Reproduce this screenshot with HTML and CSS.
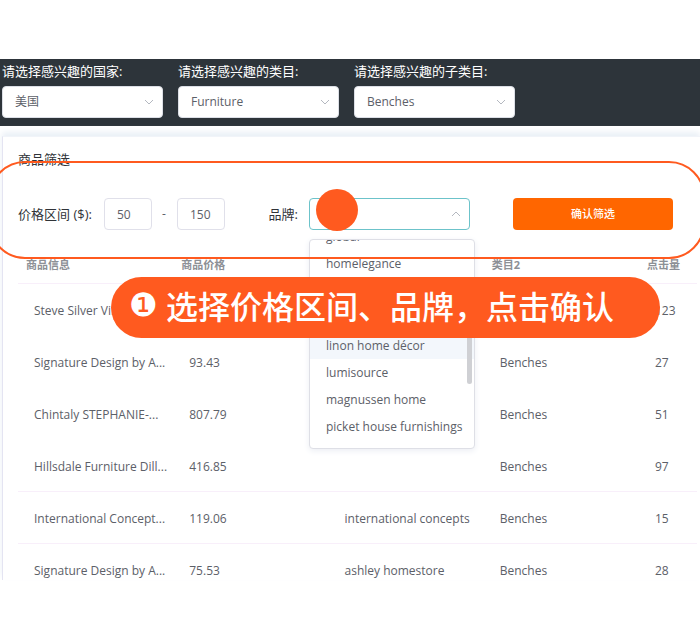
FILE: index.html
```
<!DOCTYPE html>
<html lang="zh-CN">
<head>
<meta charset="utf-8">
<title>商品筛选</title>
<link rel="stylesheet" href="styles.css">
</head>
<body>
<div class="page">
  <header class="topbar">
    <div class="field">
      <label for="country">请选择感兴趣的国家:</label>
      <div class="select">
        <select id="country"><option>美国</option></select>
        <svg class="chevron" viewBox="0 0 10 6"><path d="M1 1l4 4 4-4"/></svg>
      </div>
    </div>
    <div class="field">
      <label for="category">请选择感兴趣的类目:</label>
      <div class="select">
        <select id="category"><option>Furniture</option></select>
        <svg class="chevron" viewBox="0 0 10 6"><path d="M1 1l4 4 4-4"/></svg>
      </div>
    </div>
    <div class="field">
      <label for="subcategory">请选择感兴趣的子类目:</label>
      <div class="select">
        <select id="subcategory"><option>Benches</option></select>
        <svg class="chevron" viewBox="0 0 10 6"><path d="M1 1l4 4 4-4"/></svg>
      </div>
    </div>
  </header>

  <main class="card">
    <h1 class="title">商品筛选</h1>
    <form class="filters">
      <label class="name" for="min">价格区间 ($):</label>
      <input class="price" id="min" type="text" value="50">
      <span class="dash">-</span>
      <input class="price" id="max" type="text" value="150" aria-label="最高价格">
      <label class="name brand-name" for="brand">品牌:</label>
      <div class="select brand">
        <input id="brand" type="text" role="combobox" aria-expanded="true" aria-controls="brands">
        <svg class="chevron" viewBox="0 0 10 6"><path d="M1 5l4-4 4 4"/></svg>
        <span class="pointer"></span>
        <div class="menu">
          <ul class="options" id="brands" role="listbox">
            <li role="option">global</li>
            <li role="option">homelegance</li>
            <li class="active" role="option">linon home décor</li>
            <li role="option">lumisource</li>
            <li role="option">magnussen home</li>
            <li role="option">picket house furnishings</li>
          </ul>
          <span class="thumb"></span>
        </div>
      </div>
      <button class="confirm" type="button">确认筛选</button>
    </form>

    <table class="goods">
      <thead>
        <tr><th>商品信息</th><th>商品价格</th><th></th><th>类目2</th><th>点击量</th></tr>
      </thead>
      <tbody>
        <tr><td>Steve Silver Vi...</td><td></td><td></td><td></td><td>123</td></tr>
        <tr><td>Signature Design by A...</td><td>93.43</td><td></td><td>Benches</td><td>27</td></tr>
        <tr><td>Chintaly STEPHANIE-...</td><td>807.79</td><td></td><td>Benches</td><td>51</td></tr>
        <tr><td>Hillsdale Furniture Dill...</td><td>416.85</td><td></td><td>Benches</td><td>97</td></tr>
        <tr><td>International Concept...</td><td>119.06</td><td>international concepts</td><td>Benches</td><td>15</td></tr>
        <tr><td>Signature Design by A...</td><td>75.53</td><td>ashley homestore</td><td>Benches</td><td>28</td></tr>
      </tbody>
    </table>
    <div class="outline"></div>
    <p class="callout"><span class="step">❶</span>选择价格区间、品牌，点击确认</p>
  </main>
</div>
</body>
</html>
```
FILE: styles.css
```
* { box-sizing: border-box; }

body {
  margin: 0;
  background: #fff;
  color: #5c6068;
  font: 12px/18px "Open Sans", "Noto Sans CJK SC", sans-serif;
}

input, select, button { font: inherit; color: inherit; }

.page { padding: 59px 0 62px; overflow: hidden; }

.topbar {
  display: flex;
  gap: 15px;
  padding: 3px 2px 8px;
  background: #2d343a;
}

.field { flex: 0 1 161px; }

.field label {
  display: block;
  margin-bottom: 6px;
  color: #fff;
  font-size: 13px;
  white-space: nowrap;
}

.select { position: relative; display: flex; align-items: center; }

.select select, .select input {
  width: 100%;
  height: 32px;
  padding: 0 28px 0 12px;
  border: 1px solid #dcdfe6;
  border-radius: 4px;
  background: #fff;
  appearance: none;
  outline: none;
}

.select .chevron {
  position: absolute;
  right: 9px;
  width: 10px;
  height: 6px;
  fill: none;
  stroke: #b4b8c0;
}

.card {
  position: relative;
  margin: 10px 0 0 2px;
  padding: 12px 3px 0 15px;
  border-left: 1px solid #e4e4f2;
  border-top: 1px solid #f1f4f9;
  box-shadow: 0 -4px 6px #eaf0f6;
}

.title {
  margin: 0;
  color: #303338;
  font-size: 13px;
  line-height: 20px;
  font-weight: 400;
}

.filters { display: flex; align-items: center; padding-top: 29px; }

.filters .name { color: #303338; font-size: 13px; white-space: nowrap; }

.price {
  width: 48px;
  height: 32px;
  margin-left: 12px;
  padding: 0 12px;
  border: 1px solid #e0e0ea;
  border-radius: 4px;
  outline: none;
}

.dash { width: 16px; margin-left: 4px; text-align: center; }
.dash + .price { margin-left: 5px; }

.filters .brand-name { margin-left: auto; }

.brand { width: 161px; margin: 0 43px 0 11px; }
.brand input { border-color: #6cc3ca; }

.pointer {
  position: absolute;
  left: 7px;
  top: -9px;
  width: 42px;
  height: 42px;
  border-radius: 50%;
  background: #ff5a1f;
}

.menu {
  position: absolute;
  z-index: 1;
  top: 41px;
  left: 0;
  width: 166px;
  height: 210px;
  border: 1px solid #dedfe6;
  border-radius: 4px;
  background: #fff;
  box-shadow: 0 2px 6px #eceef4;
  overflow: hidden;
}

.options { margin: -17px 0 0; padding: 0; list-style: none; }
.options li { padding-left: 16px; line-height: 27px; white-space: nowrap; }
.options .active { margin-top: 55px; background: #f3f7fc; }

.thumb {
  position: absolute;
  right: 2px;
  top: 60px;
  width: 5px;
  height: 84px;
  border-radius: 3px;
  background: #cfd0d4;
}

.confirm {
  width: 160px;
  height: 32px;
  margin-right: 24px;
  border: 0;
  border-radius: 4px;
  background: #ff6600;
  color: #fff;
  font-size: 11px;
  font-weight: 500;
}

.goods {
  width: 100%;
  margin-top: 19px;
  border-collapse: collapse;
  table-layout: fixed;
}

.goods th {
  padding: 7px 8px 9px;
  border-bottom: 1px solid #f8effa;
  color: #8d9096;
  font-size: 11px;
  font-weight: 700;
  text-align: left;
}

.goods th:last-child { width: 58px; }

.goods td {
  height: 52px;
  padding: 18px 0 15px 16px;
  border-bottom: 1px solid #f8effa;
  white-space: nowrap;
}

.goods tr:nth-child(-n+3) td { border-color: transparent; }
.goods tr:last-child td { height: 34px; padding-bottom: 0; border: 0; }

.outline {
  position: absolute;
  z-index: 2;
  top: 24px;
  left: -14px;
  right: -5px;
  height: 98px;
  border: 2px solid #ff5a1f;
  border-radius: 36px;
  pointer-events: none;
}

.callout {
  position: absolute;
  z-index: 3;
  top: 140px;
  left: 108px;
  display: flex;
  align-items: center;
  margin: 0;
  padding: 0 46px 4px 18px;
  border-radius: 31px;
  background: #ff5a1f;
  color: #fff;
  font-family: "Noto Sans CJK SC", sans-serif;
  font-size: 32px;
  line-height: 57px;
  font-weight: 500;
  white-space: nowrap;
}

.step { width: 37px; font-family: "DejaVu Sans", sans-serif; font-weight: 400; }
```
